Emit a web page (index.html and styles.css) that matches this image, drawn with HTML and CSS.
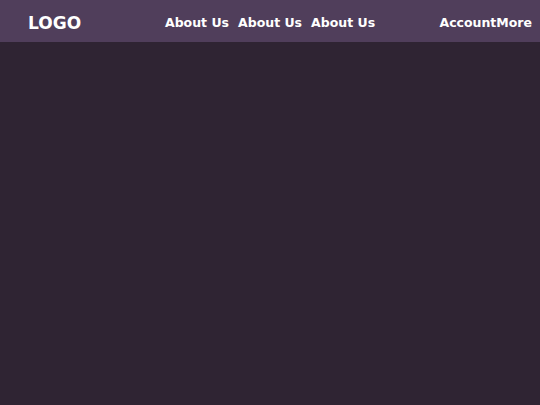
FILE: index.html
```html
<!DOCTYPE html>
<html>
<head>
<meta charset="utf-8">
<link rel="stylesheet" href="styles.css">
</head>
<body>
<header class="topbar">
  <div class="logo">LOGO</div>
  <nav class="nav">
    <a class="nav-link" href="#">About Us</a>
    <a class="nav-link" href="#">About Us</a>
    <a class="nav-link" href="#">About Us</a>
  </nav>
  <div class="account">
    <a class="nav-link" href="#">Account</a><a class="nav-link" href="#">More</a>
  </div>
</header>
<main class="content"></main>
</body>
</html>
```
FILE: styles.css
```css
html, body {
  margin: 0;
  padding: 0;
  height: 100%;
}
body {
  background: #2f2433;
  font-family: "DejaVu Sans", sans-serif;
  color: #ffffff;
}
.topbar {
  height: 42px;
  background: #503e5b;
  display: flex;
  align-items: center;
  padding: 2px 8px 0 28px;
  box-sizing: border-box;
}
.logo {
  font-weight: bold;
  font-size: 17px;
  width: 137px;
  margin-top: 1px;
}
.nav {
  display: flex;
  gap: 9px;
  flex: 1;
}
.nav-link {
  color: #ffffff;
  text-decoration: none;
  font-weight: bold;
  font-size: 12.5px;
}
.account {
  display: flex;
}
```
